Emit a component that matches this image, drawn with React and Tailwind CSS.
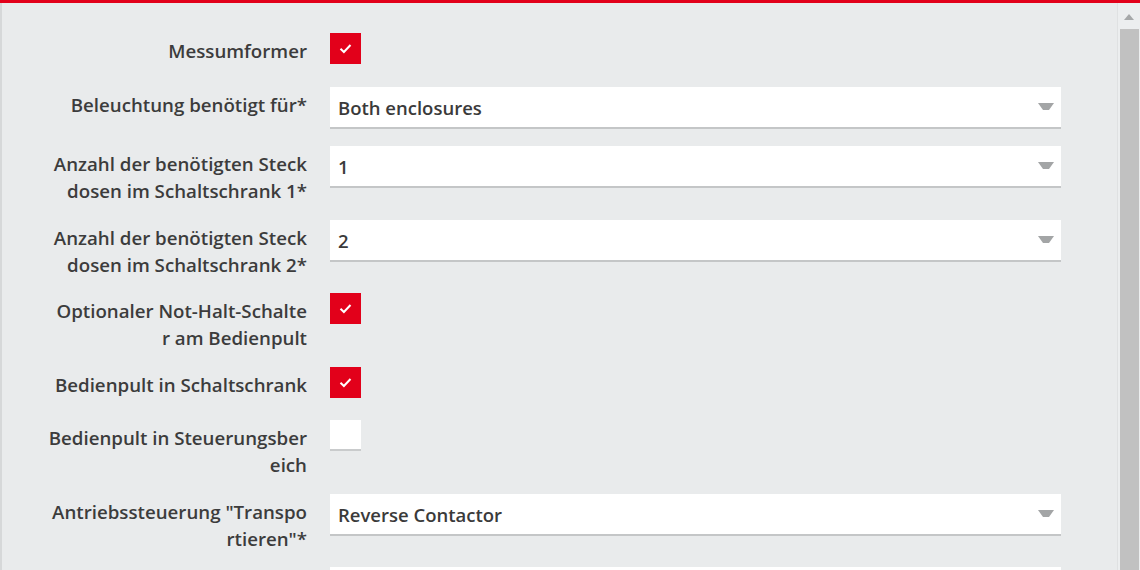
import React from 'react';

const rows = [
  { label: ['Messumformer'], type: 'check', checked: true, h: 'h-[54px]' },
  { label: ['Beleuchtung benötigt für*'], type: 'select', value: 'Both enclosures', h: 'h-[59px]' },
  { label: ['Anzahl der benötigten Steck', 'dosen im Schaltschrank 1*'], type: 'select', value: '1', h: 'h-[74px]' },
  { label: ['Anzahl der benötigten Steck', 'dosen im Schaltschrank 2*'], type: 'select', value: '2', h: 'h-[73px]' },
  { label: ['Optionaler Not-Halt-Schalte', 'r am Bedienpult'], type: 'check', checked: true, h: 'h-[74px]' },
  { label: ['Bedienpult in Schaltschrank'], type: 'check', checked: true, h: 'h-[53px]' },
  { label: ['Bedienpult in Steuerungsber', 'eich'], type: 'check', checked: false, h: 'h-[74px]' },
  { label: ['Antriebssteuerung "Transpo', 'rtieren"*'], type: 'select', value: 'Reverse Contactor', h: 'h-[73px]' },
  { label: [''], type: 'select', value: '', h: 'h-[60px]' },
];

const CheckBox = ({ checked }) =>
  checked ? (
    <div className="w-[31px] h-[31px] bg-[#e2001a] flex items-center justify-center">
      <svg width="13" height="11" viewBox="0 0 13 11">
        <path d="M1.5 5.8 L4.9 9 L11.5 2" fill="none" stroke="white" strokeWidth="2" />
      </svg>
    </div>
  ) : (
    <div className="w-[31px] h-[31px] bg-white border-b-2 border-[#c9cbcc]" />
  );

const Select = ({ value }) => (
  <div className="w-[731px] h-[42px] bg-white border-b-2 border-[#c4c6c7] flex items-center justify-between pl-[8px] pr-[7px]">
    <span className="pt-[2px] text-[18.5px] font-semibold text-[#3a3a3a]">{value}</span>
    <svg width="16" height="8" viewBox="0 0 16 8">
      <path d="M0 0 H16 L11 7 H5 Z" fill="#a3a5a6" />
    </svg>
  </div>
);

export default function App() {
  return (
    <div
      className="w-[1140px] h-[570px] overflow-hidden bg-[#e9ebec] flex flex-col"
      style={{ fontFamily: '"Open Sans", "Noto Sans", sans-serif' }}
    >
      <div className="h-[3px] bg-[#e2001a] shrink-0" />
      <div className="flex flex-1 min-h-0">
        <div className="flex-1 border-l-2 border-[#d6d8d9] pt-[30px]">
          {rows.map((r, i) => (
            <div key={i} className={`flex items-start ${r.h}`}>
              <div className="w-[305px] shrink-0 text-right pt-[4px] text-[18.7px] leading-[27px] font-semibold text-[#3c3c3c] whitespace-nowrap">
                {r.label.map((l, j) => (
                  <div key={j}>{l}</div>
                ))}
              </div>
              <div className="ml-[23px]">
                {r.type === 'check' ? <CheckBox checked={r.checked} /> : <Select value={r.value} />}
              </div>
            </div>
          ))}
        </div>
        <div className="w-[23px] shrink-0 flex flex-col items-center border-l border-[#dfe1e2] bg-[#eceeef]">
          <svg width="12" height="8" viewBox="0 0 12 8" className="mt-[10px]">
            <path d="M6 1 L11 7 H1 Z" fill="#a6a8a9" />
          </svg>
          <div className="mt-[8px] w-[19px] flex-1 bg-[#c1c1c1]" />
        </div>
      </div>
    </div>
  );
}
